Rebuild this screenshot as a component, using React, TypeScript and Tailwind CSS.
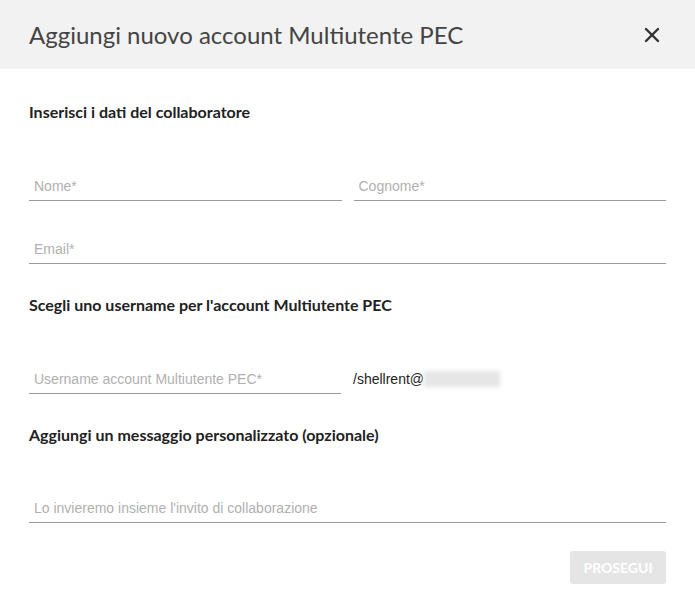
import { X } from "lucide-react";

const Field = ({ placeholder }: { placeholder: string }) => (
  <input
    type="text"
    placeholder={placeholder}
    className="h-[30px] w-full border-b border-[#9a9a9a] bg-transparent px-[5px] font-['Liberation_Sans',Arial,sans-serif] text-[14px] text-[#222] outline-none placeholder:text-[#b0b0b0]"
  />
);

const SectionTitle = ({ children }: { children: React.ReactNode }) => (
  <h3 className="h-5 text-[16px] leading-5 font-bold text-[#222]">{children}</h3>
);

const App = () => {
  return (
    <div className="h-[616px] w-[695px] bg-white font-['Lato',sans-serif]">
      <div className="flex h-[69px] items-center justify-between bg-[#f2f2f2] pr-[31px] pl-[29px]">
        <h2 className="text-[24px] font-normal text-[#444]">Aggiungi nuovo account Multiutente PEC</h2>
        <button className="text-[#333]">
          <X className="h-6 w-6" strokeWidth={2.4} />
        </button>
      </div>

      <div className="px-[29px] pt-[33px]">
        <SectionTitle>Inserisci i dati del collaboratore</SectionTitle>

        <div className="mt-[49px] grid grid-cols-2 gap-[12px]">
          <Field placeholder="Nome*" />
          <Field placeholder="Cognome*" />
        </div>

        <div className="mt-[33px]">
          <Field placeholder="Email*" />
        </div>

        <div className="mt-[31px]">
          <SectionTitle>Scegli uno username per l'account Multiutente PEC</SectionTitle>
        </div>

        <div className="mt-[49px] flex items-center">
          <div className="w-[312px]">
            <Field placeholder="Username account Multiutente PEC*" />
          </div>
          <span className="ml-[12px] font-['Liberation_Sans',Arial,sans-serif] text-[14px] text-[#222]">/shellrent@</span>
          <span className="h-[16px] w-[76px] bg-[#e6e6e6] blur-[2px]" />
        </div>

        <div className="mt-[31px]">
          <SectionTitle>Aggiungi un messaggio personalizzato (opzionale)</SectionTitle>
        </div>

        <div className="mt-[48px]">
          <Field placeholder="Lo invieremo insieme l'invito di collaborazione" />
        </div>

        <div className="mt-[28px] flex justify-end">
          <button
            disabled
            className="h-[33px] w-[96px] rounded-[3px] bg-[#e5e5e5] text-[14px] font-bold text-white"
          >
            PROSEGUI
          </button>
        </div>
      </div>
    </div>
  );
};

export default App;
